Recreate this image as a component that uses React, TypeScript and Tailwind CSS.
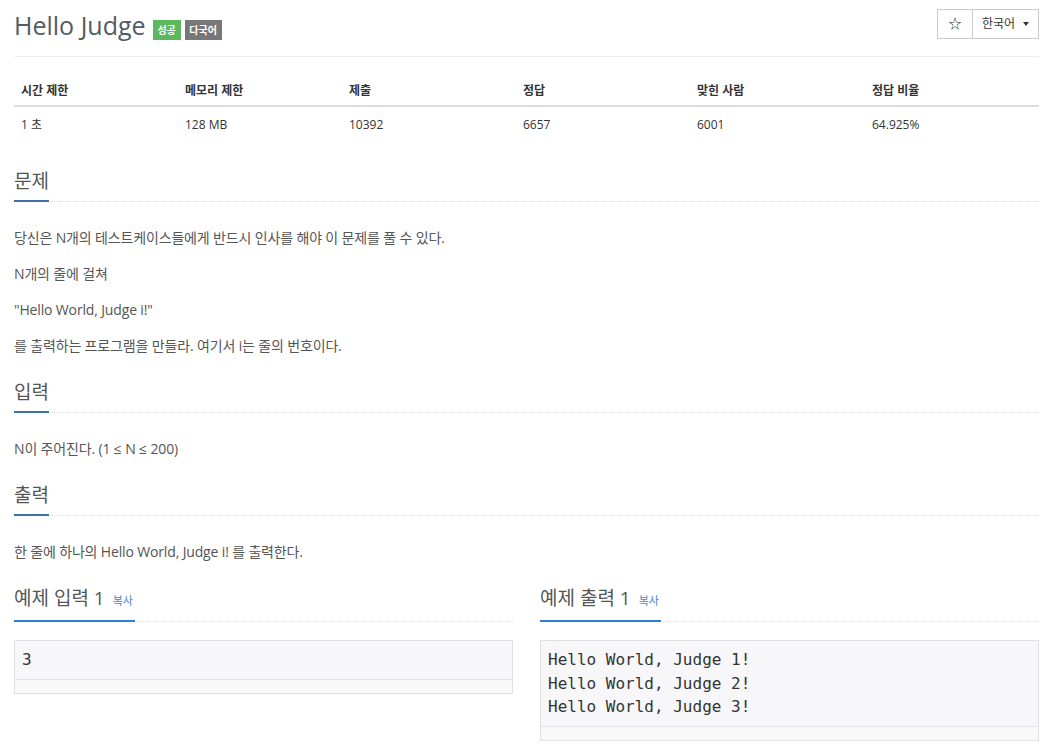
import React from "react";

const FONT = '"Open Sans", "Noto Sans CJK KR", sans-serif';

const stats = [
  { label: "시간 제한", value: "1 초" },
  { label: "메모리 제한", value: "128 MB" },
  { label: "제출", value: "10392" },
  { label: "정답", value: "6657" },
  { label: "맞힌 사람", value: "6001" },
  { label: "정답 비율", value: "64.925%" },
];

function Headline({ title, copy }: { title: string; copy?: boolean }) {
  return (
    <div
      className={
        "border-b border-dotted " + (copy ? "border-[#d6e1ee]" : "border-[#dddddd]")
      }
    >
      <h2
        className={
          "inline-block -mb-px pb-[5px] text-[19px] leading-[28px] text-[#555] border-b-2 " +
          (copy ? "border-[#2f7bd0] pr-[2px]" : "border-[#3d6fa8]")
        }
      >
        {title}
        {copy && <span className="ml-[8px] text-[11px] text-[#4a86cc]">복사</span>}
      </h2>
    </div>
  );
}

function Sample({ lines }: { lines: string[] }) {
  return (
    <div className="mt-[18px] border border-[#e1e1e4] bg-[#f7f7f9]">
      <pre
        className="px-[7px] pt-[7px] pb-[7px] text-[16px] leading-[23.5px] text-[#333]"
        style={{ fontFamily: '"DejaVu Sans Mono", monospace' }}
      >
        {lines.join("\n")}
      </pre>
      <div className="h-[14px] border-t border-[#e4e4e6] bg-[#f9f9f9]" />
    </div>
  );
}

function Section({ title, children }: { title: string; children: React.ReactNode }) {
  return (
    <section className="mb-[7px] flex flex-col">
      <Headline title={title} />
      <div className="mt-[25px] text-[14px] leading-[22px] tracking-[-0.15px] text-[#555]">
        {children}
      </div>
    </section>
  );
}

export default function App() {
  return (
    <div className="bg-white px-[14px] text-[#555]" style={{ fontFamily: FONT }}>
      {/* 헤더 */}
      <div className="flex items-start justify-between border-b border-[#eeeeee] pt-[9px] pb-[15px]">
        <div className="flex items-end">
          <h1 className="text-[25px] leading-[32px] text-[#535b65]">Hello Judge</h1>
          <span className="ml-[7px] mb-px flex h-[20px] w-[28px] items-center justify-center bg-[#5cb85c] text-[10px] font-bold text-white">
            성공
          </span>
          <span className="ml-[4px] mb-px flex h-[20px] w-[37px] items-center justify-center bg-[#777777] text-[10px] font-bold text-white">
            다국어
          </span>
        </div>
        <div className="flex h-[30px] border border-[#cccccc] text-[12px] text-[#333]">
          <div className="flex w-[35px] items-center justify-center border-r border-[#cccccc] text-[13px]">
            ☆
          </div>
          <div className="flex w-[65px] items-center justify-center gap-[8px]">
            한국어
            <span className="border-x-[3px] border-t-[4px] border-x-transparent border-t-[#333]" />
          </div>
        </div>
      </div>

      {/* 통계 */}
      <div className="mt-[20px] mb-[24px] text-[12px] text-[#333]">
        <div className="grid h-[30px] grid-cols-[164px_164px_174px_174px_175px_1fr] items-center border-b-2 border-[#dddddd] font-bold">
          {stats.map((s) => (
            <div key={s.label} className="px-[7px]">
              {s.label}
            </div>
          ))}
        </div>
        <div className="grid h-[36px] grid-cols-[164px_164px_174px_174px_175px_1fr] items-center">
          {stats.map((s) => (
            <div key={s.label} className="px-[7px]">
              {s.value}
            </div>
          ))}
        </div>
      </div>

      <Section title="문제">
        <p className="mb-[14px]">당신은 N개의 테스트케이스들에게 반드시 인사를 해야 이 문제를 풀 수 있다.</p>
        <p className="mb-[14px]">N개의 줄에 걸쳐</p>
        <p className="mb-[14px]">"Hello World, Judge i!"</p>
        <p className="mb-[14px]">를 출력하는 프로그램을 만들라. 여기서 i는 줄의 번호이다.</p>
      </Section>

      <Section title="입력">
        <p className="mb-[14px]">N이 주어진다. (1 ≤ N ≤ 200)</p>
      </Section>

      <Section title="출력">
        <p className="mb-[14px]">한 줄에 하나의 Hello World, Judge i! 를 출력한다.</p>
      </Section>

      {/* 예제 */}
      <div className="grid grid-cols-2 gap-[27px] pb-[3px]">
        <div>
          <Headline title="예제 입력 1" copy />
          <Sample lines={["3"]} />
        </div>
        <div>
          <Headline title="예제 출력 1" copy />
          <Sample lines={["Hello World, Judge 1!", "Hello World, Judge 2!", "Hello World, Judge 3!"]} />
        </div>
      </div>
    </div>
  );
}
